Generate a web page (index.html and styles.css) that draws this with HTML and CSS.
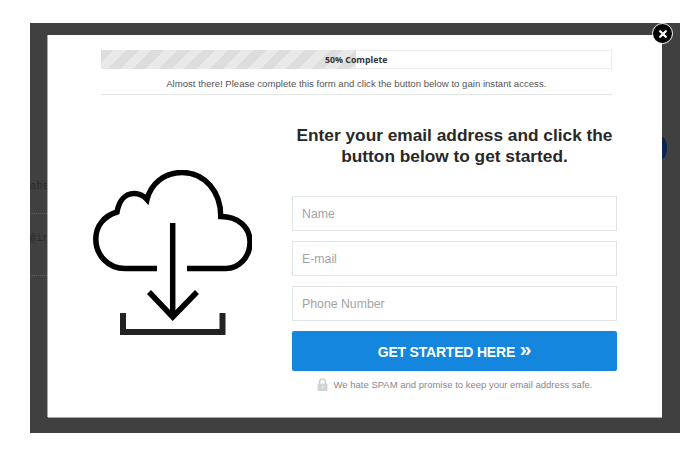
FILE: index.html
```html
<!DOCTYPE html>
<html lang="en">
<head>
<meta charset="utf-8">
<title>Get started</title>
<link rel="stylesheet" href="styles.css">
</head>
<body>
<div class="overlay">
  <span class="peek peek-label">abe</span>
  <span class="peek peek-mail">@in</span>
  <span class="peek-line peek-line-a"></span>
  <span class="peek-line peek-line-b"></span>
  <span class="peek-dot"></span>
  <div class="modal">
    <div class="progress-wrap">
      <div class="progress">
        <div class="progress-fill"></div>
        <span class="progress-label">50% Complete</span>
      </div>
      <p class="progress-note">Almost there! Please complete this form and click the button below to gain instant access.</p>
    </div>
    <div class="content">
      <div class="art">
        <svg class="art-icon" width="160" height="166" viewBox="92 170 160 166" fill="none" stroke="#000" stroke-width="5.500">
          <path d="M157 268.500H125C108 268.500 95.800 255 95.800 239C95.800 226 104 216 117 212C119 201 125 193.500 134 193.500C139 193.500 143.500 195.500 147 199.500C151 183 165 172.500 182 172.500C205 172.500 220.800 192 220.800 216.500C238 216.500 250 227 250 242C250 257 239 268.500 226 268.500H187"/>
          <path d="M172.700 223V318"/>
          <path d="M149 292L172.700 317L197 292"/>
          <path class="art-tray" d="M123 313V332H222.500V313"/>
        </svg>
      </div>
      <form class="signup">
        <h1 class="signup-title">Enter your email address and click the button below to get started.</h1>
        <input class="field" type="text" placeholder="Name">
        <input class="field" type="text" placeholder="E-mail">
        <input class="field" type="text" placeholder="Phone Number">
        <button class="cta" type="button">GET STARTED HERE <span class="cta-arrows">»</span></button>
        <p class="privacy">
          <svg class="lock" width="11" height="13" viewBox="0 0 11 13">
            <path d="M2.500 6V4a3 3 0 0 1 6 0V6" fill="none" stroke="#cfcfcf" stroke-width="1.500"/>
            <rect x="0.500" y="5.500" width="10" height="7.500" rx="1" fill="#d4d4d4"/>
            <rect x="5" y="8" width="1" height="2.500" fill="#f2f2f2"/>
          </svg>
          We hate SPAM and promise to keep your email address safe.
        </p>
      </form>
    </div>
  </div>
  <button class="close" type="button" aria-label="Close">
    <svg width="8" height="8" viewBox="0 0 8 8" stroke="#fff" stroke-width="2.200" stroke-linecap="round"><path d="M1.200 1.200L6.800 6.800M6.800 1.200L1.200 6.800"/></svg>
  </button>
</div>
</body>
</html>
```
FILE: styles.css
```css
* { box-sizing: border-box; }
html, body { margin: 0; background: #fff; }
body { padding: 23px 17px 28px 30px; font-family: "Liberation Sans", Arial, sans-serif; }

.overlay {
  position: relative;
  width: 650px;
  height: 410px;
  padding: 12px 18px 16px 17.500px;
  background: #3f403f;
  overflow: visible;
}

.peek { position: absolute; left: 0; width: 17px; overflow: hidden; font: 10px "Liberation Mono", monospace; color: #2a2a2a; letter-spacing: 0.500px; }
.peek-label { top: 158px; }
.peek-mail { top: 210px; }
.peek-line { position: absolute; left: 0; width: 17px; border-top: 1px dotted #5c5c5c; }
.peek-line-a { top: 190px; }
.peek-line-b { top: 252px; }
.peek-dot {
  position: absolute;
  left: 632px;
  top: 114px;
  width: 5px;
  height: 22px;
  border-radius: 0 100% 100% 0 / 0 50% 50% 0;
  background: #0b2550;
}

.modal {
  height: 382px;
  background: #fff;
  padding-top: 15px;
  box-shadow: -1px 0 0 #a9a9a9, 0 1px 0 #a9a9a9;
}

.progress-wrap { margin: 0 50.500px 0 53.500px; }
.progress {
  position: relative;
  display: flex;
  align-items: center;
  justify-content: center;
  height: 19px;
  border: 1px solid #ececec;
  background: #fff;
}
.progress-fill {
  position: absolute;
  left: -1px;
  top: -1px;
  bottom: -1px;
  width: 255px;
  background: repeating-linear-gradient(135deg, #dddddd 0 9px, #e9e9e9 9px 18px);
}
.progress-label {
  position: relative;
  font: 700 8.800px "Open Sans", sans-serif;
  color: #333;
}
.progress-note {
  margin: 0;
  height: 26px;
  padding-top: 8px;
  border-bottom: 1px solid #e4e6e6;
  font-size: 9.600px;
  line-height: 13px;
  text-align: center;
  color: #555;
}

.content { display: flex; }
.art { width: 244.500px; padding: 75px 0 0 44.500px; }
.art-icon { display: block; }
.art-tray { stroke: #222; stroke-width: 6px; }

.signup { width: 325px; padding-top: 30px; display: flex; flex-direction: column; }
.signup-title {
  margin: 0 0 29px;
  font-size: 17.300px;
  line-height: 21px;
  font-weight: 700;
  text-align: center;
  color: #282828;
}
.field {
  display: block;
  width: 100%;
  height: 35px;
  margin: 0 0 10px;
  padding: 0 9px;
  border: 1px solid #dfe5e8;
  background: #fff;
  font: 12.300px "Liberation Sans", Arial, sans-serif;
}
.field::placeholder { color: #a3a3a3; opacity: 1; }
.cta {
  height: 40px;
  padding: 0 0 2px;
  border: 0;
  border-radius: 2px;
  background: #1486dd;
  color: #fff;
  font: 700 14px "Liberation Sans", Arial, sans-serif;
  letter-spacing: -0.200px;
}
.cta-arrows { font-size: 21px; font-weight: 700; line-height: 16px; margin-left: 1px; vertical-align: 1px; }
.privacy {
  display: flex;
  align-items: center;
  justify-content: center;
  gap: 6px;
  margin: 7px 0 0;
  font-size: 9.500px;
  line-height: 13px;
  color: #888;
}
.lock { flex: none; }

.close {
  position: absolute;
  right: 7px;
  top: 0;
  display: flex;
  align-items: center;
  justify-content: center;
  width: 21px;
  height: 21px;
  padding: 0;
  border: 1.500px solid #fff;
  border-radius: 50%;
  background: #000;
}
```
